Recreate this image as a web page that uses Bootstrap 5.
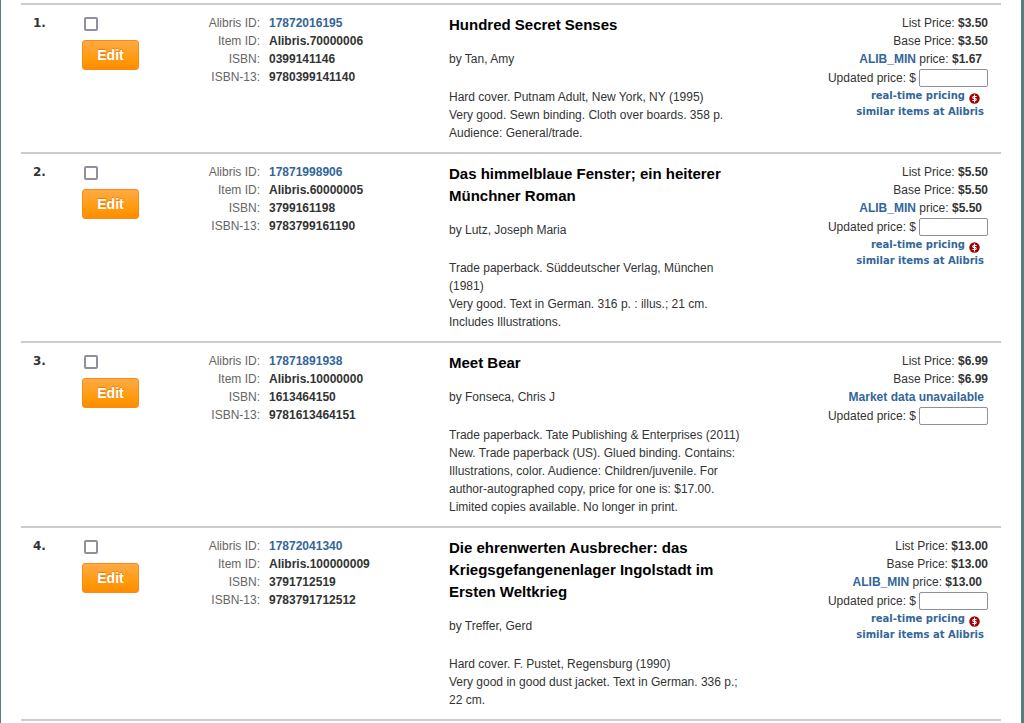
<!DOCTYPE html>
<html lang="en">
<head>
<meta charset="utf-8">
<meta name="viewport" content="width=device-width, initial-scale=1">
<title>Alibris inventory</title>
<link rel="stylesheet" href="https://cdn.jsdelivr.net/npm/bootstrap@5.3.0/dist/css/bootstrap.min.css">
<style>
body { font: 12px/18px "Liberation Sans", Arial, sans-serif; color: #333; background: #fff; }
a { color: #369; text-decoration: none; font-weight: bold; }
a:hover { text-decoration: underline; }
.page-frame { border-left: 1px solid #567f7d; border-right: 3px solid #567f7d; padding: 3px 20px 0; min-height: 100vh; }
.inventory > li { display: grid; grid-template-columns: 61px 114px minmax(0, 253px) minmax(0, 300px) minmax(170px, 1fr); border-top: 2px solid #ccc; padding: 9px 13px 10px 0; }
.inventory > li:last-child { border-bottom: 2px solid #ccc; }
.item-no { font: bold 12px/18px "DejaVu Sans", Verdana, sans-serif; padding-left: 12px; }
.pick { appearance: none; display: block; width: 14px; height: 14px; margin: 3px 2px 9px; border: 2px solid #8f8f9d; border-radius: 2px; background: #fff; }
.pick:checked { background: #369; }
.edit-btn { --bs-btn-color: #fff; --bs-btn-hover-color: #fff; --bs-btn-active-color: #fff; font: bold 14px/18px "Liberation Sans", Arial, sans-serif; width: 57px; height: 30px; padding: 0; border: 1px solid #f68b1c; border-radius: 3px; background: linear-gradient(#ffaa45, #ff9a0c 65%, #ff8c00); text-shadow: 0 -1px 1px rgba(190, 90, 0, .5); }
.ids { display: grid; grid-template-columns: 64px 1fr; column-gap: 9px; }
.ids dt { font-weight: normal; text-align: right; color: #666; }
.ids dd { font-weight: bold; margin: 0; }
.book-title { font: bold 15px/22px "Liberation Sans", Arial, sans-serif; color: #000; margin: 0 0 14px; }
.byline { margin-bottom: 20px; }
.market { padding-right: 6px; }
.price-box { width: 69px; height: 18px; border: 1px solid #8f8f9d; border-radius: 2px; padding: 0 3px; margin-left: 3px; }
.updated { margin: 1px 0; }
.tools { font: bold 10px/16px "DejaVu Sans", Verdana, sans-serif; }
.coin { width: 11px; height: 11px; margin-left: 4px; margin-top: 5px; }
</style>
</head>
<body>
<main class="page-frame">
<ol class="inventory list-unstyled m-0">
<li>
  <div class="item-no">1.</div>
  <div><input class="pick" type="checkbox" aria-label="Select item 1"><button type="button" class="btn edit-btn">Edit</button></div>
  <dl class="ids m-0 align-content-start"><dt>Alibris ID:</dt><dd><a href="#">17872016195</a></dd><dt>Item ID:</dt><dd>Alibris.70000006</dd><dt>ISBN:</dt><dd>0399141146</dd><dt>ISBN-13:</dt><dd>9780399141140</dd></dl>
  <div><h2 class="book-title">Hundred Secret Senses</h2><p class="byline">by Tan, Amy</p><p class="m-0">Hard cover. Putnam Adult, New York, NY (1995)<br>Very good. Sewn binding. Cloth over boards. 358 p. Audience: General/trade.</p></div>
  <div class="text-end"><div>List Price: <b>$3.50</b></div><div>Base Price: <b>$3.50</b></div><div class="market"><a href="#">ALIB_MIN</a> price: <b>$1.67</b></div>
    <div class="updated d-flex justify-content-end align-items-center"><label for="p1">Updated price: $</label><input class="price-box" id="p1" type="text"></div>
    <div class="tools pe-1"><div class="d-flex justify-content-end pe-1"><a href="#">real-time pricing</a><svg class="coin" viewBox="0 0 11 11" aria-hidden="true"><circle cx="5.500" cy="5.500" r="5.200" fill="#a00000"/><path d="M7.600 3.500H4.500Q3 4.500 4.500 5.500H6.500Q8 6.500 6.500 7.500H3.400M5.500 1.500V9.500" fill="none" stroke="#fff" stroke-width="1.100"/></svg></div><a class="d-block" href="#">similar items at Alibris</a></div></div>
</li>
<li>
  <div class="item-no">2.</div>
  <div><input class="pick" type="checkbox" aria-label="Select item 2"><button type="button" class="btn edit-btn">Edit</button></div>
  <dl class="ids m-0 align-content-start"><dt>Alibris ID:</dt><dd><a href="#">17871998906</a></dd><dt>Item ID:</dt><dd>Alibris.60000005</dd><dt>ISBN:</dt><dd>3799161198</dd><dt>ISBN-13:</dt><dd>9783799161190</dd></dl>
  <div><h2 class="book-title">Das himmelblaue Fenster; ein heiterer Münchner Roman</h2><p class="byline">by Lutz, Joseph Maria</p><p class="m-0">Trade paperback. Süddeutscher Verlag, München (1981)<br>Very good. Text in German. 316 p. : illus.; 21 cm. Includes Illustrations.</p></div>
  <div class="text-end"><div>List Price: <b>$5.50</b></div><div>Base Price: <b>$5.50</b></div><div class="market"><a href="#">ALIB_MIN</a> price: <b>$5.50</b></div>
    <div class="updated d-flex justify-content-end align-items-center"><label for="p2">Updated price: $</label><input class="price-box" id="p2" type="text"></div>
    <div class="tools pe-1"><div class="d-flex justify-content-end pe-1"><a href="#">real-time pricing</a><svg class="coin" viewBox="0 0 11 11" aria-hidden="true"><circle cx="5.500" cy="5.500" r="5.200" fill="#a00000"/><path d="M7.600 3.500H4.500Q3 4.500 4.500 5.500H6.500Q8 6.500 6.500 7.500H3.400M5.500 1.500V9.500" fill="none" stroke="#fff" stroke-width="1.100"/></svg></div><a class="d-block" href="#">similar items at Alibris</a></div></div>
</li>
<li>
  <div class="item-no">3.</div>
  <div><input class="pick" type="checkbox" aria-label="Select item 3"><button type="button" class="btn edit-btn">Edit</button></div>
  <dl class="ids m-0 align-content-start"><dt>Alibris ID:</dt><dd><a href="#">17871891938</a></dd><dt>Item ID:</dt><dd>Alibris.10000000</dd><dt>ISBN:</dt><dd>1613464150</dd><dt>ISBN-13:</dt><dd>9781613464151</dd></dl>
  <div><h2 class="book-title">Meet Bear</h2><p class="byline">by Fonseca, Chris J</p><p class="m-0">Trade paperback. Tate Publishing &amp; Enterprises (2011)<br>New. Trade paperback (US). Glued binding. Contains: Illustrations, color. Audience: Children/juvenile. For author-autographed copy, price for one is: $17.00. Limited copies available. No longer in print.</p></div>
  <div class="text-end"><div>List Price: <b>$6.99</b></div><div>Base Price: <b>$6.99</b></div><div class="pe-1"><a href="#">Market data unavailable</a></div>
    <div class="updated d-flex justify-content-end align-items-center"><label for="p3">Updated price: $</label><input class="price-box" id="p3" type="text"></div></div>
</li>
<li>
  <div class="item-no">4.</div>
  <div><input class="pick" type="checkbox" aria-label="Select item 4"><button type="button" class="btn edit-btn">Edit</button></div>
  <dl class="ids m-0 align-content-start"><dt>Alibris ID:</dt><dd><a href="#">17872041340</a></dd><dt>Item ID:</dt><dd>Alibris.100000009</dd><dt>ISBN:</dt><dd>3791712519</dd><dt>ISBN-13:</dt><dd>9783791712512</dd></dl>
  <div><h2 class="book-title">Die ehrenwerten Ausbrecher: das Kriegsgefangenenlager Ingolstadt im Ersten Weltkrieg</h2><p class="byline">by Treffer, Gerd</p><p class="m-0">Hard cover. F. Pustet, Regensburg (1990)<br>Very good in good dust jacket. Text in German. 336 p.; 22 cm.</p></div>
  <div class="text-end"><div>List Price: <b>$13.00</b></div><div>Base Price: <b>$13.00</b></div><div class="market"><a href="#">ALIB_MIN</a> price: <b>$13.00</b></div>
    <div class="updated d-flex justify-content-end align-items-center"><label for="p4">Updated price: $</label><input class="price-box" id="p4" type="text"></div>
    <div class="tools pe-1"><div class="d-flex justify-content-end pe-1"><a href="#">real-time pricing</a><svg class="coin" viewBox="0 0 11 11" aria-hidden="true"><circle cx="5.500" cy="5.500" r="5.200" fill="#a00000"/><path d="M7.600 3.500H4.500Q3 4.500 4.500 5.500H6.500Q8 6.500 6.500 7.500H3.400M5.500 1.500V9.500" fill="none" stroke="#fff" stroke-width="1.100"/></svg></div><a class="d-block" href="#">similar items at Alibris</a></div></div>
</li>
</ol>
</main>
<script src="https://cdn.jsdelivr.net/npm/bootstrap@5.3.0/dist/js/bootstrap.bundle.min.js"></script>
</body>
</html>
